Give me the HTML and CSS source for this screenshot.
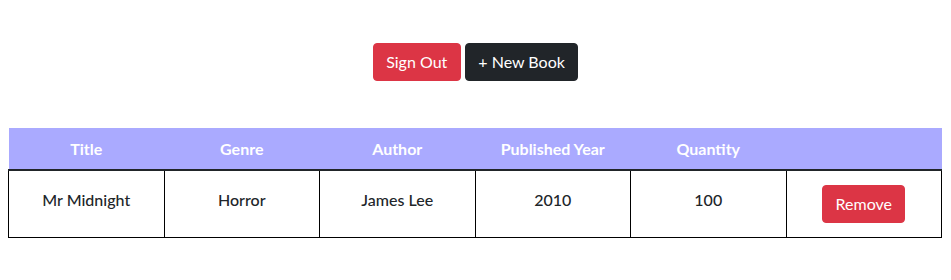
FILE: index.html
```html
<!DOCTYPE html>
<html>
<head>
<meta charset="utf-8">
<link rel="stylesheet" href="styles.css">
</head>
<body>
<div class="actions">
  <button class="btn btn-danger">Sign Out</button>
  <button class="btn btn-dark">+ New Book</button>
</div>
<table class="books">
  <thead>
    <tr>
      <th>Title</th>
      <th>Genre</th>
      <th>Author</th>
      <th>Published Year</th>
      <th>Quantity</th>
      <th></th>
    </tr>
  </thead>
  <tbody>
    <tr>
      <td class="text">Mr Midnight</td>
      <td class="text">Horror</td>
      <td class="text">James Lee</td>
      <td class="text">2010</td>
      <td class="text">100</td>
      <td><button class="btn btn-danger">Remove</button></td>
    </tr>
  </tbody>
</table>
</body>
</html>
```

FILE: styles.css
```css
body {
  margin: 8px;
  font-family: Lato, "Noto Sans", sans-serif;
  font-size: 16px;
  color: #212529;
  background: #fff;
}
.actions {
  display: flex;
  justify-content: center;
  gap: 4px;
  padding-top: 35px;
  margin-bottom: 47px;
}
.btn {
  font-family: inherit;
  font-size: 16px;
  line-height: 24px;
  height: 38px;
  padding: 6px 12.5px;
  border: 1px solid transparent;
  border-radius: 4px;
  color: #fff;
  cursor: pointer;
}
.btn-danger { background: #dc3545; border-color: #dc3545; }
.btn-dark { background: #212529; border-color: #212529; }
.books {
  width: 934px;
  border-collapse: collapse;
  table-layout: fixed;
}
.books th {
  background: #aaaaff;
  color: #fff;
  font-weight: bold;
  height: 41px;
  padding: 0;
  text-align: center;
  border-bottom: 2px solid #212529;
}
.books td {
  border: 1px solid #000;
  text-align: center;
  height: 66px;
  padding: 0;
  font-weight: 500;
}
.books td.text {
  height: 56px;
  padding-bottom: 10px;
}
```
